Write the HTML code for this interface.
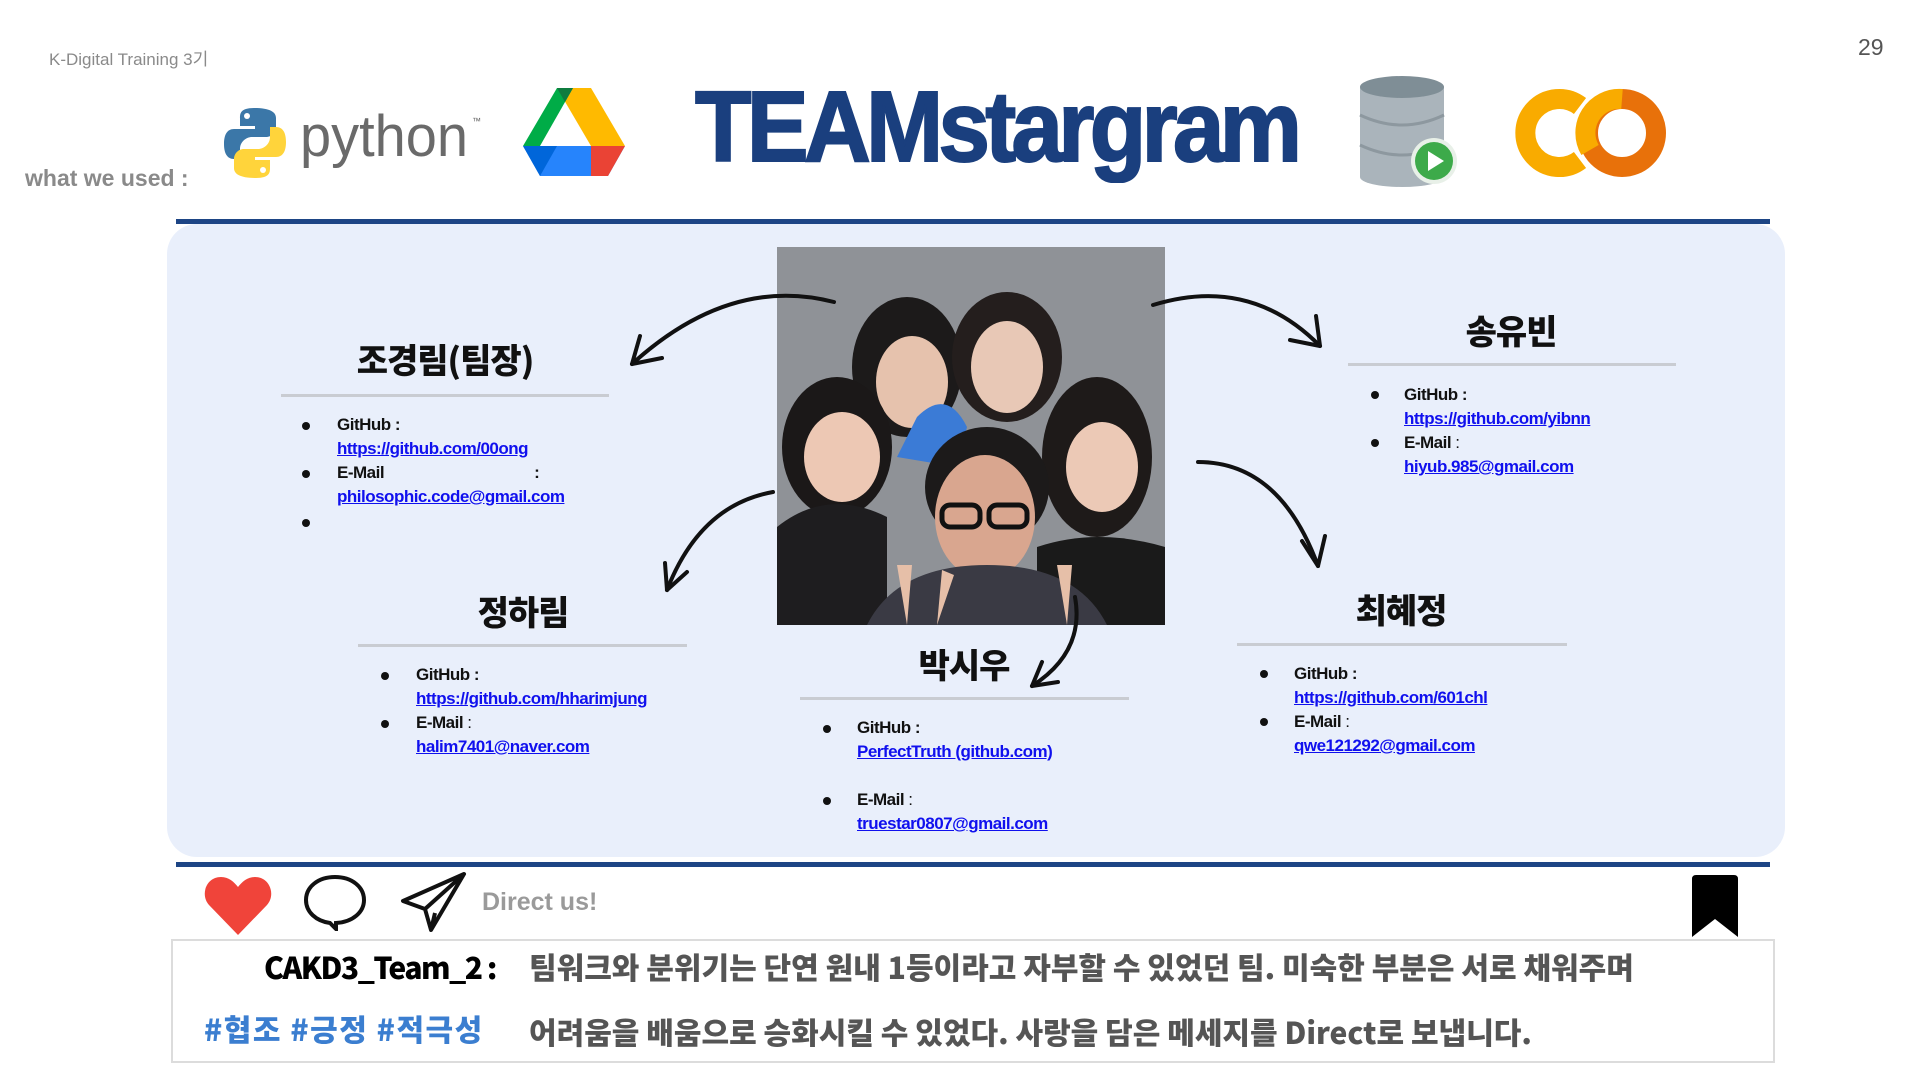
<!DOCTYPE html>
<html><head><meta charset="utf-8">
<style>
*{margin:0;padding:0;box-sizing:border-box}
body{width:1920px;height:1080px;background:#fff;position:relative;overflow:hidden;font-family:"Liberation Sans","Noto Sans CJK KR",sans-serif}
.a{position:absolute;white-space:nowrap}
.k{font-family:"Noto Sans CJK KR","Liberation Sans",sans-serif;font-weight:900}
.name{position:absolute;font-family:"Noto Sans CJK KR",sans-serif;font-weight:900;font-size:34px;color:#111;transform:translateX(-50%);line-height:1;letter-spacing:-1px}
.ul{position:absolute;height:3px;background:#c9ccd2}
.li{position:absolute;font-family:"Liberation Sans",sans-serif;font-size:17px;line-height:24px;font-weight:bold;color:#111;letter-spacing:-0.5px}
.li a{color:#1010ee;text-decoration:underline;font-weight:bold}
.dot{position:absolute;width:8px;height:8px;border-radius:50%;background:#111}
</style></head><body>
<div class="a" style="left:49px;top:45px;font-size:17px;color:#8a8a8a">K-Digital Training 3기</div>
<div class="a" style="left:1858px;top:34px;font-size:23px;color:#555">29</div>
<div class="a" style="left:25px;top:165px;font-size:23px;color:#8a8a8a;font-weight:bold">what we used :</div>

<svg class="a" style="left:224px;top:104px" width="260" height="78" viewBox="0 0 260 78">
<path d="M30 4c-14 0-14 6-14 10v8h15v3H10C3 25 0 31 0 40s3 15 10 15h6V45c0-7 6-12 12-12h14c6 0 10-5 10-10V14C52 8 46 4 30 4z" fill="#3b77a8"/>
<circle cx="23" cy="12" r="3" fill="#fff"/>
<path d="M32 74c14 0 14-6 14-10v-8H31v-3h21c7 0 10-6 10-15s-3-15-10-15h-6v10c0 7-6 12-12 12H20c-6 0-10 5-10 10v9c0 6 6 10 22 10z" fill="#ffd43b"/>
<circle cx="39" cy="66" r="3" fill="#fff"/>
<text x="76" y="52" font-family="Liberation Sans" font-size="58" fill="#6a6a6a" textLength="168" lengthAdjust="spacingAndGlyphs">python</text>
<text x="248" y="20" font-family="Liberation Sans" font-size="9" fill="#646464">™</text>
</svg>
<svg class="a" style="left:523px;top:88px" width="102" height="90" viewBox="0 0 102 90">
<polygon points="34,0 68,0 102,58 68,58" fill="#ffba00"/>
<polygon points="0,58 34,58 102,58 85,88 17,88" fill="#2684fc"/>
<polygon points="68,58 102,58 85,88 68,88" fill="#ea4335"/>
<polygon points="0,58 34,58 17,88" fill="#0066da"/>
<polygon points="34,0 50,0 17,58 0,58" fill="#00ac47"/>
<polygon points="34,0 50,0 42,14" fill="#0f7c3f"/>
</svg>
<div class="a" style="left:695px;top:77px;font-size:100px;font-weight:bold;color:#1a3f7e;letter-spacing:-5px;line-height:1;transform:scaleX(0.925);transform-origin:left;-webkit-text-stroke:2px #1a3f7e">TEAMstargram</div>
<svg class="a" style="left:1358px;top:75px" width="102" height="114" viewBox="0 0 102 114">
<rect x="2" y="12" width="84" height="90" fill="#aab4bb"/>
<ellipse cx="44" cy="102" rx="42" ry="10" fill="#aab4bb"/>
<ellipse cx="44" cy="12" rx="42" ry="11" fill="#7f8e96"/>
<path d="M2 40q42 20 84 0M2 70q42 20 84 0" stroke="#8d989f" stroke-width="3" fill="none"/>
<circle cx="76" cy="86" r="23" fill="#e8f0e8"/>
<circle cx="76" cy="86" r="19" fill="#3daa4a"/>
<polygon points="70,76 70,96 86,86" fill="#fff"/>
</svg>
<svg class="a" style="left:1510px;top:88px" width="160" height="90" viewBox="0 0 160 90">
<path d="M70 18A34 34 0 1 0 70 72" stroke="#f9ab00" stroke-width="20" fill="none"/>
<circle cx="112" cy="45" r="34" stroke="#e8710a" stroke-width="20" fill="none"/>
<path d="M112 11A34 34 0 0 0 80 62" stroke="#f9ab00" stroke-width="20" fill="none"/>
</svg>

<div class="a" style="left:176px;top:219px;width:1594px;height:5px;background:#1d4585"></div>
<div class="a" style="left:167px;top:224px;width:1618px;height:633px;background:#e9effb;border-radius:30px"></div>
<div class="a" style="left:176px;top:862px;width:1594px;height:5px;background:#1d4585"></div>

<svg class="a" style="left:777px;top:247px" width="388" height="378" viewBox="0 0 388 378">
<rect width="388" height="378" fill="#8f9297"/>
<ellipse cx="130" cy="120" rx="55" ry="70" fill="#1c1a1a"/>
<ellipse cx="230" cy="110" rx="55" ry="65" fill="#241e1d"/>
<ellipse cx="135" cy="135" rx="36" ry="46" fill="#e6c2ad"/>
<ellipse cx="230" cy="120" rx="36" ry="46" fill="#e8c8b6"/>
<path d="M140 170q30-30 50 10l-10 40-60-10z" fill="#3b7bd6"/>
<ellipse cx="60" cy="200" rx="55" ry="70" fill="#1b1818"/>
<ellipse cx="65" cy="210" rx="38" ry="45" fill="#edc8b4"/>
<ellipse cx="320" cy="210" rx="55" ry="80" fill="#1e1a19"/>
<ellipse cx="325" cy="220" rx="36" ry="45" fill="#ecc9b6"/>
<path d="M0 280q50-40 110-10v108H0z" fill="#1e1d1f"/>
<path d="M260 300q60-20 128 0v78H260z" fill="#1a1a1a"/>
<ellipse cx="210" cy="240" rx="62" ry="60" fill="#1c1a1a"/>
<ellipse cx="208" cy="270" rx="50" ry="62" fill="#d9a68f"/>
<rect x="165" y="258" width="38" height="22" rx="8" fill="none" stroke="#111" stroke-width="5"/>
<rect x="212" y="258" width="38" height="22" rx="8" fill="none" stroke="#111" stroke-width="5"/>
<path d="M90 378q30-60 120-60t120 60z" fill="#3a3a44"/>
<path d="M130 378l-10-60 15 0zM160 378l5-55 12 5zM290 378l-10-60 15 0z" fill="#e6bfa8"/>
</svg>

<svg class="a" style="left:0;top:0" width="1920" height="1080">
<g stroke="#111" stroke-width="4" fill="none" stroke-linecap="round">
<path d="M834 302Q730 275 632 364"/><path d="M632 364l30-6M632 364l8-28"/>
<path d="M773 492Q700 505 667 590"/><path d="M667 590l20-18M667 590l-2-27"/>
<path d="M1153 305Q1250 275 1320 346"/><path d="M1320 346l-30-6M1320 346l-4-30"/>
<path d="M1198 462Q1280 462 1318 566"/><path d="M1318 566l-16-25M1318 566l7-30"/>
<path d="M1075 597Q1085 652 1032 686"/><path d="M1032 686l26-4M1032 686l10-24"/>
</g></svg>

<div class="name" style="left:445px;top:342px">조경림(팀장)</div>
<div class="ul" style="left:281px;top:394px;width:328px"></div>
<div class="dot" style="left:302px;top:422px"></div>
<div class="dot" style="left:302px;top:470px"></div>
<div class="dot" style="left:302px;top:519px"></div>
<div class="li" style="left:337px;top:413px">GitHub :<br><a>https://github.com/00ong</a><br>E-Mail<span style="margin-left:150px">:</span><br><a>philosophic.code@gmail.com</a></div>

<div class="name" style="left:523px;top:594px">정하림</div>
<div class="ul" style="left:358px;top:644px;width:329px"></div>
<div class="dot" style="left:381px;top:672px"></div>
<div class="dot" style="left:381px;top:720px"></div>
<div class="li" style="left:416px;top:663px">GitHub :<br><a>https://github.com/hharimjung</a><br>E-Mail <span style="font-weight:normal">:</span><br><a>halim7401@naver.com</a></div>

<div class="name" style="left:964px;top:647px">박시우</div>
<div class="ul" style="left:800px;top:697px;width:329px"></div>
<div class="dot" style="left:823px;top:725px"></div>
<div class="dot" style="left:823px;top:797px"></div>
<div class="li" style="left:857px;top:716px">GitHub :<br><a>PerfectTruth (github.com)</a></div>
<div class="li" style="left:857px;top:788px">E-Mail <span style="font-weight:normal">:</span><br><a>truestar0807@gmail.com</a></div>

<div class="name" style="left:1511px;top:313px">송유빈</div>
<div class="ul" style="left:1348px;top:363px;width:328px"></div>
<div class="dot" style="left:1371px;top:391px"></div>
<div class="dot" style="left:1371px;top:439px"></div>
<div class="li" style="left:1404px;top:383px">GitHub :<br><a>https://github.com/yibnn</a><br>E-Mail <span style="font-weight:normal">:</span><br><a>hiyub.985@gmail.com</a></div>

<div class="name" style="left:1401px;top:592px">최혜정</div>
<div class="ul" style="left:1237px;top:643px;width:330px"></div>
<div class="dot" style="left:1260px;top:670px"></div>
<div class="dot" style="left:1260px;top:718px"></div>
<div class="li" style="left:1294px;top:662px">GitHub :<br><a>https://github.com/601chl</a><br>E-Mail <span style="font-weight:normal">:</span><br><a>qwe121292@gmail.com</a></div>

<svg class="a" style="left:204px;top:875px" width="68" height="60" viewBox="0 0 68 60">
<path d="M34 60L5 30C-4 20 2 2 17 2c8 0 13 5 17 10 4-5 9-10 17-10 15 0 21 18 12 28z" fill="#f0443a"/>
</svg>
<svg class="a" style="left:302px;top:873px" width="66" height="58" viewBox="0 0 66 58">
<path d="M33 4C16 4 4 14 4 27c0 12 10 21 24 23l6 6 0-6c17-1 28-11 28-23C62 14 50 4 33 4z" fill="none" stroke="#111" stroke-width="4"/>
</svg>
<svg class="a" style="left:400px;top:871px" width="68" height="62" viewBox="0 0 68 62">
<path d="M64 3L3 30l22 8 6 21 33-56zM25 38L64 3M31 59l4-17" fill="none" stroke="#111" stroke-width="4" stroke-linejoin="round"/>
</svg>
<div class="a" style="left:482px;top:888px;font-size:25px;color:#9a9a9a;font-weight:bold">Direct us!</div>
<svg class="a" style="left:1690px;top:875px" width="50" height="62" viewBox="0 0 50 62">
<path d="M2 4q0-4 4-4h38q4 0 4 4v58L25 44 2 62z" fill="#000"/>
</svg>

<div class="a" style="left:171px;top:939px;width:1604px;height:124px;border:2px solid #dcdcdc"></div>
<div class="a k" style="left:264px;top:944px;font-size:30px;color:#000;letter-spacing:-1.5px">CAKD3_Team_2 :</div>
<div class="a k" style="left:529px;top:944px;font-size:30px;color:#555;letter-spacing:0px">팀워크와 분위기는 단연 원내 1등이라고 자부할 수 있었던 팀. 미숙한 부분은 서로 채워주며</div>
<div class="a k" style="left:204px;top:1006px;font-size:30px;color:#3b7ed0;letter-spacing:1.5px">#협조 #긍정 #적극성</div>
<div class="a k" style="left:529px;top:1009px;font-size:30px;color:#555;letter-spacing:0px">어려움을 배움으로 승화시킬 수 있었다. 사랑을 담은 메세지를 Direct로 보냅니다.</div>
</body></html>
